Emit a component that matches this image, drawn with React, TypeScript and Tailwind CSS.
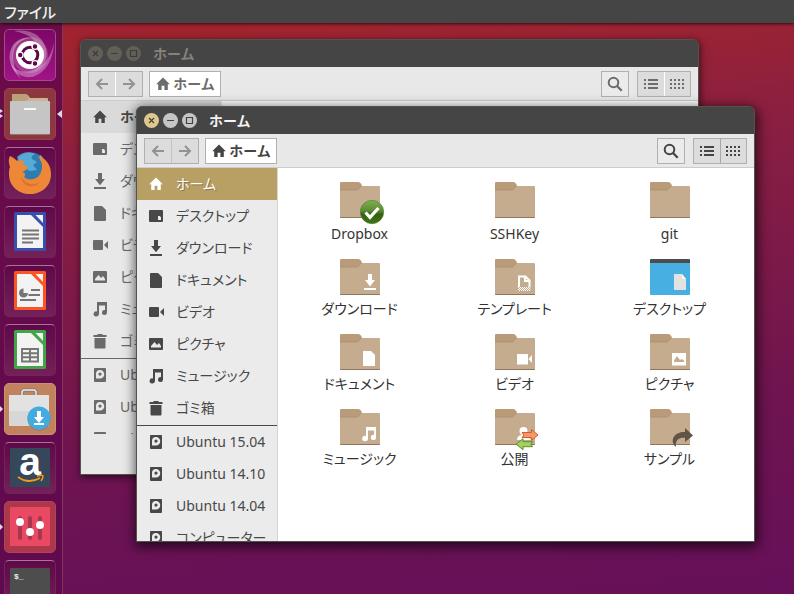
import type { ReactNode } from "react";
import clsx from "clsx";

type IconProps = { name: string };

/* 16px symbolic icons used in the sidebar and the path button */
const symbols: Record<string, ReactNode> = {
    home: <path d="M8 1.5 14.8 8.2H12.8V14H9.4V9.8H6.6V14H3.2V8.2H1.2Z" />,
    desktop: <path fillRule="evenodd" d="M2 2h12a1 1 0 0 1 1 1v10a1 1 0 0 1-1 1H2a1 1 0 0 1-1-1V3a1 1 0 0 1 1-1ZM10 8v4h3V9.3L11.7 8Z" />,
    download: <path d="M6 0h4v6h3L8 12.2 3 6h3ZM2 14h12v2H2Z" />,
    document: <path d="M3 1h7l4 4v10a1 1 0 0 1-1 1H3a1 1 0 0 1-1-1V2a1 1 0 0 1 1-1Z" />,
    video: <path d="M2 3h8a1 1 0 0 1 1 1v8a1 1 0 0 1-1 1H2a1 1 0 0 1-1-1V4a1 1 0 0 1 1-1ZM12 8l4-4v8Z" />,
    picture: <path fillRule="evenodd" d="M2 2h12a1 1 0 0 1 1 1v10a1 1 0 0 1-1 1H2a1 1 0 0 1-1-1V3a1 1 0 0 1 1-1ZM3 11.5h10V10l-2-3-2 2-2.5-3L3 10Z" />,
    music: <path d="M5 1h10v10.500a2.500 2.500 0 1 1-2-2.450V4.500H7V13A2.700 2.500 0 1 1 5 10.500Z" />,
    trash: <path d="M6 1h4l1 1h3.500v2h-13V2H5ZM2.500 5h11v9.500a1 1 0 0 1-1 1h-9a1 1 0 0 1-1-1Z" />,
    disk: <path fillRule="evenodd" d="M3 1h10a1 1 0 0 1 1 1v12a1 1 0 0 1-1 1H3a1 1 0 0 1-1-1V2a1 1 0 0 1 1-1ZM8 3a4 4 0 0 0-4 4v4.500h4A4.200 4.200 0 0 0 8 3Zm0 2.500a1.600 1.600 0 1 1 0 3.200 1.600 1.600 0 0 1 0-3.200Z" />,
};

function Symbol({ name }: IconProps) {
    return (
        <svg viewBox="0 0 16 16" className="size-4 shrink-0 fill-current" aria-hidden="true">
            {symbols[name]}
        </svg>
    );
}

const places = [
    { label: "ホーム", icon: "home" },
    { label: "デスクトップ", icon: "desktop" },
    { label: "ダウンロード", icon: "download" },
    { label: "ドキュメント", icon: "document" },
    { label: "ビデオ", icon: "video" },
    { label: "ピクチャ", icon: "picture" },
    { label: "ミュージック", icon: "music" },
    { label: "ゴミ箱", icon: "trash" },
];

const devices = ["Ubuntu 15.04", "Ubuntu 14.10", "Ubuntu 14.04", "コンピューター"];

const files = [
    { label: "Dropbox", icon: "dropbox" },
    { label: "SSHKey", icon: "plain" },
    { label: "git", icon: "plain" },
    { label: "ダウンロード", icon: "download" },
    { label: "テンプレート", icon: "template" },
    { label: "デスクトップ", icon: "desktop" },
    { label: "ドキュメント", icon: "document" },
    { label: "ビデオ", icon: "video" },
    { label: "ピクチャ", icon: "picture" },
    { label: "ミュージック", icon: "music" },
    { label: "公開", icon: "public" },
    { label: "サンプル", icon: "link" },
];

const emblems: Record<string, ReactNode> = {
    dropbox: (
        <>
            <defs>
                <linearGradient id="sync" x2="0" y2="1">
                    <stop offset="0" stopColor="#82b04e" />
                    <stop offset=".45" stopColor="#5a8a35" />
                    <stop offset=".6" stopColor="#33610f" />
                    <stop offset="1" stopColor="#3f7416" />
                </linearGradient>
            </defs>
            <circle cx="32" cy="30" r="11.700" fill="url(#sync)" stroke="#4d7a2c" strokeWidth=".6" />
            <path d="m25.500 30.500 4.500 4.800 8.500-9.300" fill="none" stroke="#fff" strokeWidth="3.200" />
        </>
    ),
    download: <path fill="#fff" d="M28 15h4v6h3l-5 6.500-5-6.500h3ZM24 29h12v2H24Z" />,
    template: (
        <>
            <path d="M24 28V17.500h6.500l4 4V28M30 17.500V22h4.500" fill="none" stroke="#fff" strokeWidth="2" />
            <path d="M23 28.500h12.500M23 30.500h12.500" fill="none" stroke="#fff" strokeDasharray="1 1" />
            <path d="M24 29.500h11.500M24 31.500h11.500" fill="none" stroke="#fff" strokeDasharray="1 1" />
        </>
    ),
    document: <path fill="#fff" d="M23 17h8l4 4v11H23Z" />,
    video: <path fill="#fff" d="M22 20h11v10.500H22ZM33.500 25l3.500-4v8Z" />,
    picture: <path fill="#fff" fillRule="evenodd" d="M22 19h14v12.500H22Zm2 9h10v-1.500L32 25l-2 1-3-4-3 4.500Z" />,
    music: <path fill="#fff" d="M26 18h10v10.500a2.600 2.600 0 1 1-2-2.550v-4.450h-6V29.500a2.900 2.700 0 1 1-2-2.600Z" />,
    public: (
        <>
            <circle cx="28.500" cy="22" r="4" fill="#fff" />
            <path fill="#fff" d="M22 31c0-4 3-5 6-5s6 1 8 5Z" />
            <path d="M27 23.500h9.500V20.500l6.500 5.500-6.500 5.500v-3H27l2-2.500Z" fill="#f39a6d" stroke="#dd5a29" strokeLinejoin="round" />
            <path d="M37.500 32.700H28v-3L21 35.200l7 5.500v-3h9.500l-1.500-2.500Z" fill="#a8cd62" stroke="#57951c" strokeLinejoin="round" />
        </>
    ),
    link: <path d="M26 38c-5-4-4-10.500 1-13.300 2.400-1.300 5-1.700 8-1.700v-4l8 7.500-8 6.500v-4.300c-6-.4-10 2-9 9.300Z" fill="#615444" />,
};

function FolderIcon({ name }: IconProps) {
    return (
        <svg viewBox="0 0 40 36" className="h-9 w-10 overflow-visible" aria-hidden="true">
            {name === "desktop" ? (
                <>
                    <rect y="1" width="40" height="35" rx="1" fill="#48afe2" />
                    <path d="M0 4V1a1 1 0 0 1 1-1h38a1 1 0 0 1 1 1v3Z" fill="#4d4d4d" />
                    <path d="M24 15h8l4 5v11H24Z" fill="#e2e2e2" />
                    <path d="M32 15v5h4Z" fill="#f8f8f8" />
                </>
            ) : (
                <>
                    <path d="M0 9V1a1 1 0 0 1 1-1h17c2 0 3 1 4 4v5Z" fill="#b99b79" />
                    <path d="M0 8h17.500l4-4H39a1 1 0 0 1 1 1v30a1 1 0 0 1-1 1H1a1 1 0 0 1-1-1Z" fill="#c5ac8e" />
                    <path d="M0 8h17.500l4-4" fill="none" stroke="#ab8d6d" strokeWidth=".8" />
                    <path d="M0 35h40a1 1 0 0 1-1 1H1a1 1 0 0 1-1-1Z" fill="#8d765e" />
                    {emblems[name]}
                </>
            )}
        </svg>
    );
}

function TitleBar({ active }: { active: boolean }) {
    const buttons = [
        { label: "閉じる", path: "m5 5 5 5m0-5-5 5" },
        { label: "最小化", path: "M4 7.500h7" },
        { label: "最大化", path: "M4.500 4.500h6v6h-6Z" },
    ];

    return (
        <header className="flex h-[27px] shrink-0 items-center gap-1 bg-[#454545] pl-[7px]">
            {buttons.map((button, index) => (
                <button
                    key={button.label}
                    aria-label={button.label}
                    className={clsx(
                        "size-[15px] rounded-full",
                        active ? "text-[#45423c]" : "bg-[#625f58] text-[#3c3b37]",
                        active && (index === 0 ? "bg-[#dfc88f]" : "bg-[#c5c5c5]"),
                    )}
                >
                    <svg viewBox="0 0 15 15" className="size-full fill-none stroke-current" strokeWidth="1.2">
                        <path d={button.path} />
                    </svg>
                </button>
            ))}
            <h2
                className={clsx(
                    "ml-2 text-sm font-bold leading-5 [font-feature-settings:normal]",
                    active ? "text-[#f3f3f3]" : "text-[#85827b]",
                )}
            >
                ホーム
            </h2>
        </header>
    );
}

function Toolbar({ active }: { active: boolean }) {
    const box = "flex h-[26px] border border-[#b0b0b0]";
    const cell = "flex flex-1 items-center justify-center";

    return (
        <div
            className={clsx(
                "flex h-[34px] shrink-0 items-center border-b border-[#cdcdcd] bg-[#e8e8e8] px-[7px]",
                active ? "text-[#454545]" : "text-[#6c6c6c]",
            )}
        >
            <div className={clsx(box, "w-[55px] bg-[#dcdcdc] text-[#929292]")}>
                <button aria-label="戻る" className={clsx(cell, "border-r", active ? "border-[#c3c3c3]" : "border-white")}>
                    <svg viewBox="0 0 14 14" className="size-[14px] fill-none stroke-current" strokeWidth="2">
                        <path d="M13 7H2M7 2 2 7l5 5" />
                    </svg>
                </button>
                <button aria-label="進む" className={cell}>
                    <svg viewBox="0 0 14 14" className="size-[14px] fill-none stroke-current" strokeWidth="2">
                        <path d="M1 7h11M7 2l5 5-5 5" />
                    </svg>
                </button>
            </div>
            <button
                className={clsx(
                    box,
                    "ml-1.5 w-[72px] items-center justify-center gap-0.5 bg-white text-sm font-bold leading-5 [font-feature-settings:normal]",
                )}
            >
                <Symbol name="home" />
                ホーム
            </button>
            <button aria-label="検索" className={clsx(box, "ml-auto w-7 items-center justify-center bg-[#ebebeb]")}>
                <svg viewBox="0 0 16 16" className="size-4 fill-none stroke-current">
                    <circle cx="6.500" cy="6.500" r="4.800" strokeWidth="2" />
                    <path d="m10 10 4.700 4.700" strokeWidth="2.300" />
                </svg>
            </button>
            <div className={clsx(box, "ml-2 w-[54px] bg-[#dcdcdc]")}>
                <button aria-label="リスト表示" className={clsx(cell, "border-r", active ? "border-[#a8a8a8]" : "border-white")}>
                    <svg viewBox="0 0 14 10" className="h-2.5 w-3.5 fill-current" shapeRendering="crispEdges">
                        <path d="M0 0h2v2H0ZM4 0h10v2H4ZM0 4h2v2H0ZM4 4h10v2H4ZM0 8h2v2H0ZM4 8h10v2H4Z" />
                    </svg>
                </button>
                <button aria-label="アイコン表示" className={cell}>
                    <svg viewBox="0 0 14 10" className="h-2.5 w-3.5 fill-none stroke-current" strokeWidth="2" shapeRendering="crispEdges">
                        <path d="M0 1h14M0 5h14M0 9h14" strokeDasharray="2 2" />
                    </svg>
                </button>
            </div>
        </div>
    );
}

function Sidebar({ active }: { active: boolean }) {
    const row = "flex h-8 w-full items-center gap-3 whitespace-nowrap pl-[11px] text-left";

    return (
        <nav
            className={clsx(
                "w-[141px] shrink-0 overflow-hidden border-r text-sm leading-5",
                active ? "border-[#d6d6d6] bg-[#ebebeb] text-[#484848]" : "mb-10 border-[#e8e8e8] bg-[#e8e8e8] text-[#6a6a6a]",
            )}
        >
            {places.map((place, index) => (
                <button
                    key={place.label}
                    className={clsx(
                        row,
                        index === 0 && active && "bg-[#b89f64] text-white [text-shadow:1px_1px_0_#8b774b]",
                        index === 0 && !active && "bg-[#dadada] font-bold text-[#484848]",
                    )}
                >
                    <Symbol name={place.icon} />
                    {place.label}
                </button>
            ))}
            <hr className="mt-px border-current" />
            {devices.map((device) => (
                <button key={device} className={row}>
                    <Symbol name="disk" />
                    {device}
                </button>
            ))}
        </nav>
    );
}

function FileWindow({ active = false, className }: { active?: boolean; className: string }) {
    return (
        <section
            className={clsx(
                "absolute flex flex-col overflow-hidden rounded-t-[6px] border border-[#55534f] bg-[#454545]",
                active ? "shadow-[1px_3px_12px_2px_rgba(0,0,0,0.65)]" : "shadow-[1px_2px_7px_1px_rgba(0,0,0,0.5)]",
                className,
            )}
        >
            <TitleBar active={active} />
            <Toolbar active={active} />
            <div className={clsx("flex min-h-0 flex-1", active ? "bg-white" : "bg-[#e8e8e8]")}>
                <Sidebar active={active} />
                <div className="grid flex-1 grid-cols-3 grid-rows-[77px_75px_75px_75px] bg-white pl-1 pr-[7px] pt-3.5">
                    {active && files.map((file) => (
                        <button key={file.label} className="flex flex-col items-center justify-between pb-[15px] text-sm text-[#333]">
                            <FolderIcon name={file.icon} />
                            {file.label}
                        </button>
                    ))}
                </div>
            </div>
        </section>
    );
}

function OfficePage({ color, children }: { color: string; children: ReactNode }) {
    return (
        <>
            <rect x="10" y="6" width="32" height="39" rx="1.500" fill={color} />
            <path d="M13 9h14l12 12v21H13Z" fill="#f3f3f3" />
            <path d="M31.500 9H39v8Z" fill="#f3f3f3" />
            {children}
        </>
    );
}

const launcherItems = [
    {
        label: "Dash",
        tile: "border-[#a14c90] bg-linear-to-b from-[#7d0766] to-[#a01486]",
        art: (
            <>
                <g fill="#fff">
                    <path d="M10 2c15-2 28 3 32 18 2 10-3 18-12 22 8-6 9-14 6-21C31 9 22 4 10 2Z" opacity=".3" />
                    <path d="M50 14c-1 17-8 30-22 34-10 1-18-4-21-13 6 8 14 9 22 6 12-4 18-14 21-27Z" opacity=".3" />
                    <path d="M17 50C6 40 2 27 9 16c5-6 11-8 18-7-9 1-14 5-17 12-3 10 1 20 7 29Z" opacity=".35" />
                    <circle cx="26" cy="26" r="18" opacity=".18" />
                </g>
                <circle cx="26" cy="26" r="14" fill="#fff" />
                <circle cx="26" cy="26" r="7.800" fill="none" stroke="#5e0748" strokeWidth="3" />
                <g fill="#5e0748" stroke="#fff" strokeWidth="1.400">
                    <circle cx="16.200" cy="26" r="2.900" />
                    <circle cx="31" cy="17.500" r="2.900" />
                    <circle cx="31" cy="34.500" r="2.900" />
                </g>
            </>
        ),
    },
    {
        label: "ファイル",
        tile: "border-[#99424a] bg-[#8d3741]",
        running: 2,
        focused: true,
        art: (
            <>
                <path d="M8 16V7a1 1 0 0 1 1-1h12c2 0 3 1 5 4h17a1 1 0 0 1 1 1v5Z" fill="#cdb594" />
                <path d="M8 15V7a1 1 0 0 1 1-1h12c2 0 3 1 4 4l-4 4Z" fill="#bb9f79" />
                <rect x="6" y="14" width="40" height="33" rx="1" fill="#8b7577" />
                <rect x="6" y="13" width="40" height="33" rx="1" fill="#c5c5c5" />
                <path d="M20 20h12v2H20Z" fill="#f8f8f8" />
            </>
        ),
    },
    {
        label: "Firefox",
        art: (
            <>
                <circle cx="27" cy="22" r="16.500" fill="#2f7cb0" />
                <path d="M13 10c5-5 12-6 18-3-3 1-4 3-3 5l5 3-4 3 4 5-7 1-9-5Z" fill="#5fb6df" opacity=".8" />
                <path d="M36 8c3 2 4 5 4 8l-4-3Z" fill="#69bfe2" />
                <path d="M6 9c3 1 5 3 7 5 2-1 5-1 7 0l-1 3 5 3c-1 3-4 4-6 5 3 0 4 3 2 5 5 5 15 2 17-5 3-8-1-13-3-16 8 2 13 9 13 18 0 12-9 20-21 20S5 39 5 27c0-3 0-5 1-7-1-4-2-7 0-11Z" fill="#ee8738" />
                <path d="M17 29c3 7 11 11 19 6-3 4-9 6-14 3-3-2-5-5-5-9Z" fill="#e27029" />
            </>
        ),
    },
    {
        label: "LibreOffice Writer",
        art: (
            <OfficePage color="#384fac">
                <path d="M18 24.500h17M18 28.500h17M18 32.500h17M18 36.500h11" stroke="#757575" strokeWidth="1.800" />
            </OfficePage>
        ),
    },
    {
        label: "LibreOffice Impress",
        art: (
            <OfficePage color="#fb5524">
                <path d="M19.500 23.500a4.500 4.500 0 1 0 4.500 4.500h-4.500Z" fill="#757575" />
                <path d="M27 25h9M24.500 30h11.500M16 35h16" stroke="#757575" strokeWidth="1.800" />
            </OfficePage>
        ),
    },
    {
        label: "LibreOffice Calc",
        art: (
            <OfficePage color="#42a347">
                <path d="M18 25h16v12.500H18ZM26 25v13M18 29.200h16M18 33.300h16" fill="none" stroke="#757575" strokeWidth="1.900" />
            </OfficePage>
        ),
    },
    {
        label: "Ubuntu ソフトウェアセンター",
        tile: "border-[#c99270] bg-[#c0835e]",
        running: 1,
        art: (
            <>
                <path d="M18 13V8.500L19.500 7h11L32 8.500V13" fill="none" stroke="#777" strokeWidth="3" />
                <path d="M18 12V8.500L19.500 7h11L32 8.500V12" fill="none" stroke="#eee" strokeWidth="1.500" />
                <path d="M5 12h40v16H5Z" fill="#e2e2e2" />
                <path d="M5 28h40v14a1 1 0 0 1-1 1H6a1 1 0 0 1-1-1Z" fill="#d7d7d7" />
                <circle cx="35" cy="36" r="11.500" fill="#9a7a69" />
                <circle cx="35" cy="35" r="11.500" fill="#42ace1" />
                <path d="M33 28h4v6h3l-5 6-5-6h3ZM30 40h10v2H30Z" fill="#fff" />
            </>
        ),
    },
    {
        label: "Amazon",
        art: (
            <>
                <rect x="6" y="6" width="40" height="39" rx="1" fill="#36475a" />
                <text x="26" y="33" textAnchor="middle" fontSize="39" fontWeight="700" fill="#fff" fontFamily="'Liberation Sans Narrow', 'Liberation Sans', sans-serif">a</text>
                <path d="M14 35c7 5 15 5 22 1" fill="none" stroke="#f59b17" strokeWidth="1.800" />
                <path d="M33 34c4-1 6-1 6 0s-1 4-2 5" fill="none" stroke="#f59b17" strokeWidth="1.500" />
            </>
        ),
    },
    {
        label: "Unity Tweak Tool",
        tile: "border-[#b04453] bg-[#ad384b]",
        running: 1,
        art: (
            <>
                <rect x="6" y="6" width="40" height="39" rx="1" fill="#ea4963" />
                <path d="M16 17v20M26 17v20M36 17v20" stroke="#a5384f" strokeWidth="4" strokeLinecap="round" />
                <g fill="#fff">
                    <circle cx="16" cy="21" r="4" />
                    <circle cx="26" cy="31" r="4" />
                    <circle cx="36" cy="24" r="4" />
                </g>
            </>
        ),
    },
    {
        label: "端末",
        art: (
            <>
                <rect x="6" y="8" width="40" height="40" rx="1" fill="#4d4d4d" />
                <text x="10" y="19" fontSize="8" fontWeight="700" fill="#eee" fontFamily="'Liberation Mono', monospace">$_</text>
            </>
        ),
    },
];

function Launcher() {
    return (
        <nav className="flex w-[63px] shrink-0 flex-col gap-[7px] border-r border-[#863459] bg-linear-to-b from-[#6c0b47] to-[#5f0950] pl-1 pt-1.5">
            {launcherItems.map((item) => (
                <button
                    key={item.label}
                    aria-label={item.label}
                    className={clsx(
                        "relative size-[52px] shrink-0 rounded-[5px] border",
                        item.tile ?? "border-[#762458] border-t-[#a6749a] bg-linear-to-b from-[#5f0849] to-[#742059]",
                    )}
                >
                    <svg viewBox="1 1 50 50" className="size-full">{item.art}</svg>
                    {item.running && (
                        <svg viewBox="0 0 4 10" className="absolute top-5 -left-[5px] h-2.5 w-1 fill-[#ddd]">
                            <path d={item.running === 2 ? "M0 0 3 2 0 4ZM0 5l3 2-3 2Z" : "M0 2l3 3-3 3Z"} />
                        </svg>
                    )}
                    {item.focused && (
                        <svg viewBox="0 0 5 8" className="absolute top-[21px] -right-[7px] h-2 w-[5px] fill-[#ddd]">
                            <path d="M5 0v8L0 4Z" />
                        </svg>
                    )}
                </button>
            ))}
        </nav>
    );
}

export default function App() {
    return (
        <div className="flex h-screen flex-col overflow-hidden bg-linear-[175deg,#9b2034_0%,#a0242f_8%,#8a1f41_28%,#6f1450_70%,#66105a_100%] font-['Noto_Sans','Noto_Sans_CJK_JP',sans-serif] [font-feature-settings:'palt']">
            <header className="z-10 flex h-[23px] shrink-0 items-center bg-[#454545] pl-1 text-[15px] font-medium leading-5 text-[#f0f0f0] shadow-[0_1px_3px_rgba(0,0,0,0.7)]">
                ファイル
            </header>
            <div className="flex min-h-0 flex-1">
                <Launcher />
                <main className="relative flex-1 overflow-hidden">
                    <FileWindow className="top-4 right-[95px] bottom-[119px] left-[17px]" />
                    <FileWindow active className="top-[83px] right-[39px] bottom-[52px] left-[73px]" />
                </main>
            </div>
        </div>
    );
}
